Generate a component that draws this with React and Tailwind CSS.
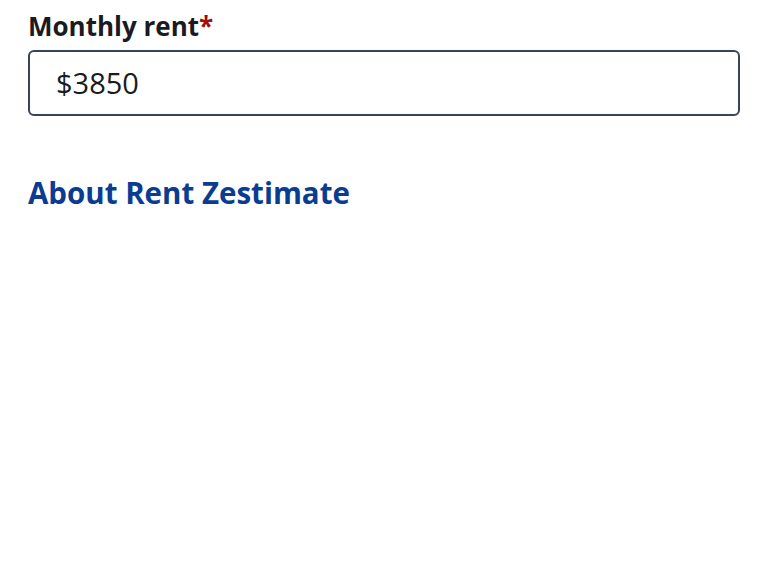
export default function App() {
  return (
    <div className="min-h-[576px] w-[768px] bg-white px-[28px] pt-[8px]" style={{ fontFamily: '"Open Sans", sans-serif' }}>
      <label className="block text-[26px] font-bold leading-[36px] text-[#1b1b1f]">
        Monthly rent<span className="text-[#a30d0d]">*</span>
      </label>
      <div className="mt-[6px] flex h-[66px] w-[712px] items-center rounded-[6px] border-2 border-[#374459] px-[26px] text-[29px] text-[#1b1b1f]">
        $3850
      </div>
      <a className="mt-[57px] block text-[29.5px] font-bold leading-[39px] text-[#0a3d91]">About Rent Zestimate</a>
    </div>
  );
}
